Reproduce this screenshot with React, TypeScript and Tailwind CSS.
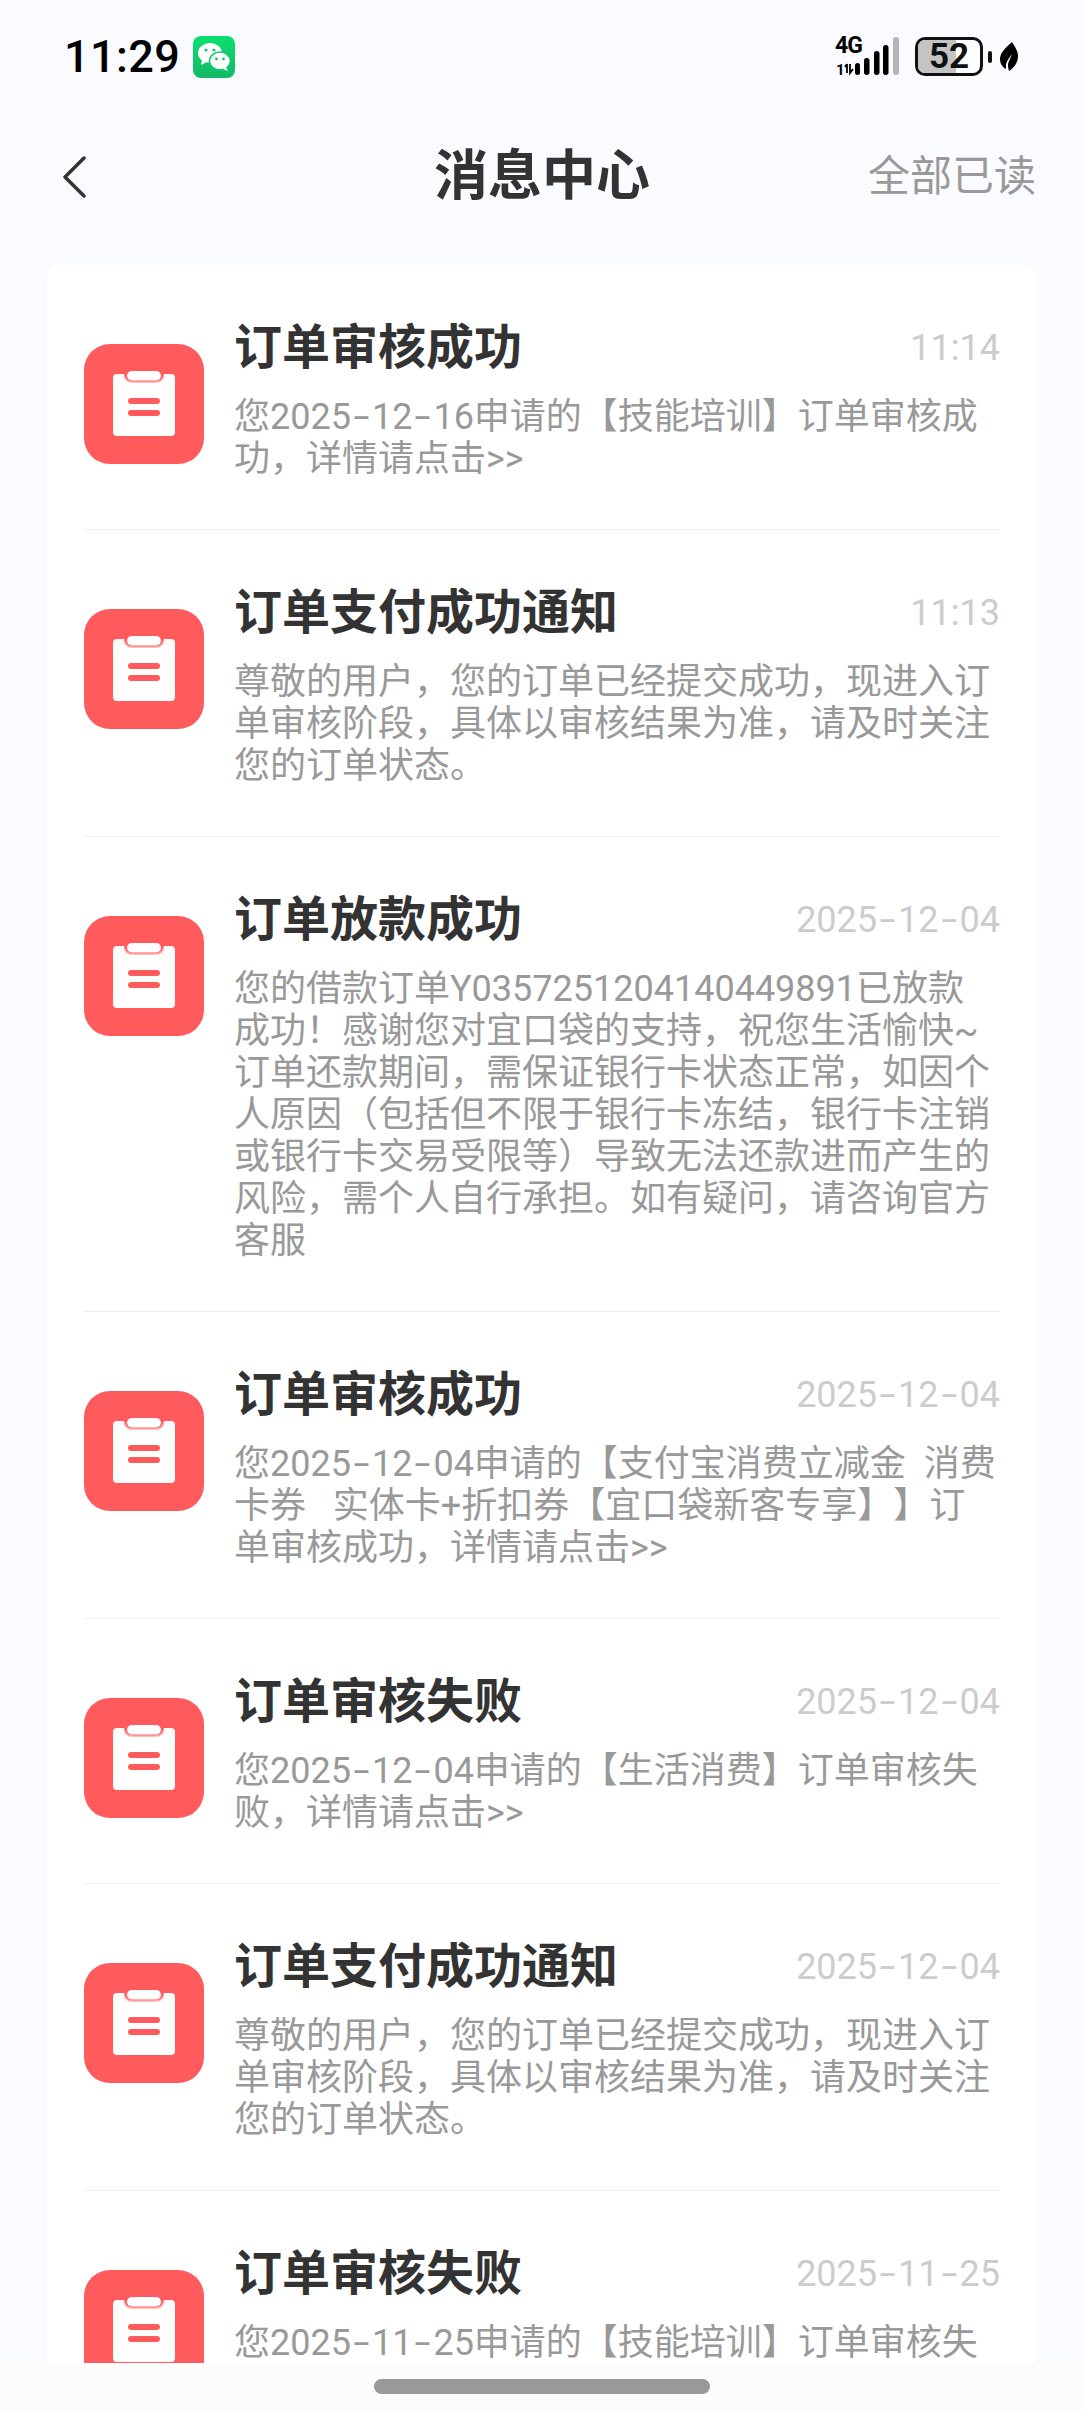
import React from "react";

const cjk = "font-['Roboto','Noto_Sans_CJK_SC',sans-serif]";

type Msg = { title: string; time: string; lines: string[] };

const msgs: Msg[] = [
  { title: "订单审核成功", time: "11:14", lines: ["您2025-12-16申请的【技能培训】订单审核成", "功，详情请点击>>"] },
  { title: "订单支付成功通知", time: "11:13", lines: ["尊敬的用户，您的订单已经提交成功，现进入订", "单审核阶段，具体以审核结果为准，请及时关注", "您的订单状态。"] },
  { title: "订单放款成功", time: "2025-12-04", lines: ["您的借款订单Y0357251204140449891已放款", "成功！感谢您对宜口袋的支持，祝您生活愉快~", "订单还款期间，需保证银行卡状态正常，如因个", "人原因（包括但不限于银行卡冻结，银行卡注销", "或银行卡交易受限等）导致无法还款进而产生的", "风险，需个人自行承担。如有疑问，请咨询官方", "客服"] },
  { title: "订单审核成功", time: "2025-12-04", lines: ["您2025-12-04申请的【支付宝消费立减金  消费", "卡券   实体卡+折扣券【宜口袋新客专享】】订", "单审核成功，详情请点击>>"] },
  { title: "订单审核失败", time: "2025-12-04", lines: ["您2025-12-04申请的【生活消费】订单审核失", "败，详情请点击>>"] },
  { title: "订单支付成功通知", time: "2025-12-04", lines: ["尊敬的用户，您的订单已经提交成功，现进入订", "单审核阶段，具体以审核结果为准，请及时关注", "您的订单状态。"] },
  { title: "订单审核失败", time: "2025-11-25", lines: ["您2025-11-25申请的【技能培训】订单审核失"] },
];

function Dashed({ text }: { text: string }) {
  const parts = text.split(/(?<=\d)-(?=\d)/);
  return (
    <>
      {parts.map((p, i) => (
        <React.Fragment key={i}>
          {i > 0 && <span className="inline-block w-[21px] text-center scale-x-[1.6]">-</span>}
          {p}
        </React.Fragment>
      ))}
    </>
  );
}

function ClipIcon() {
  return (
    <div className="w-[120px] h-[120px] rounded-[26px] bg-[#ff5a5c] shrink-0 mt-[26px] flex items-center justify-center">
      <svg width="64" height="68" viewBox="0 0 64 68">
        <path d="M5 4h7c1 5 4 8 9 8h22c5 0 8-3 9-8h7a4 4 0 0 1 4 4v54a4 4 0 0 1-4 4H5a4 4 0 0 1-4-4V8a4 4 0 0 1 4-4z" fill="#fff" />
        <rect x="15" y="1" width="34" height="9.5" rx="4.7" fill="#fff" />
        <path d="M12 5c1 5 4 7 9 7h22c5 0 8-2 9-7" fill="none" stroke="#ffa9aa" strokeWidth="1.5" />
        <rect x="16" y="28" width="32" height="6" rx="3" fill="#ff5a5c" />
        <rect x="16" y="40" width="32" height="6" rx="3" fill="#ff5a5c" />
      </svg>
    </div>
  );
}

function WeChat() {
  return (
    <svg width="42" height="42" viewBox="0 0 42 42" className="ml-[13px]">
      <defs>
        <linearGradient id="wg" x1="0" y1="0" x2="0" y2="1">
          <stop offset="0" stopColor="#0ae070" />
          <stop offset="1" stopColor="#14b866" />
        </linearGradient>
      </defs>
      <rect width="42" height="42" rx="8" fill="url(#wg)" />
      <ellipse cx="17" cy="17" rx="12" ry="10" fill="#fff" />
      <path d="M9 23l-1 6 6-3z" fill="#fff" />
      <ellipse cx="27" cy="25" rx="10.5" ry="9" fill="#fff" stroke="#10c86a" strokeWidth="1.5" />
      <path d="M33 31l2 4-5-2z" fill="#fff" />
      <circle cx="13" cy="14" r="1.6" fill="#10c86a" />
      <circle cx="21" cy="14" r="1.6" fill="#10c86a" />
      <circle cx="23.5" cy="23" r="1.4" fill="#10c86a" />
      <circle cx="30.5" cy="23" r="1.4" fill="#10c86a" />
    </svg>
  );
}

function StatusRight() {
  return (
    <div className="flex items-center">
      <div className="relative w-[64px] h-[40px] font-['Roboto',sans-serif] font-bold text-black">
        <span className="absolute left-0 top-[-3px] text-[23px] leading-[24px] tracking-[-1px]">4G</span>
        <span className="absolute left-[1px] bottom-[-1px] text-[15px] leading-[16px]">1</span>
        <svg width="64" height="40" viewBox="0 0 64 40" className="absolute left-0 top-0">
          <path d="M12 27v9M12 27l-2 3M15 27v9l3-4" stroke="#000" strokeWidth="1.8" fill="none" />
          <rect x="20" y="26" width="5" height="12" rx="2.5" fill="#000" />
          <rect x="29" y="21" width="5.5" height="17" rx="2.7" fill="#000" />
          <rect x="39" y="14" width="5.5" height="24" rx="2.7" fill="#000" />
          <rect x="48" y="8" width="5.5" height="30" rx="2.7" fill="#000" />
          <rect x="58" y="0" width="6" height="38" rx="3" fill="#b5b5b5" />
        </svg>
      </div>
      <div className="relative ml-[16px] w-[68px] h-[39px] rounded-[10px] border-[3px] border-[#111] overflow-hidden bg-white flex items-center justify-center">
        <div className="absolute left-0 top-0 bottom-0 w-[38px] bg-[#c4c4c4]" />
        <span className="relative font-['Roboto',sans-serif] font-bold text-[35px] leading-none text-[#111]">52</span>
      </div>
      <div className="ml-[5px] w-[4px] h-[12px] rounded-[2px] bg-[#111]" />
      <svg width="20" height="30" viewBox="0 0 20 30" className="ml-[7px]">
        <path d="M13 0c4 6 6 10 6 14 0 6-3 11-9 15-1-3-1-5-1-7 1-4 3-7 4-10-2 3-5 6-6 10v5C3 25 1 21 1 17 1 11 7 5 13 0z" fill="#000" />
      </svg>
    </div>
  );
}

function Row({ m, last }: { m: Msg; last: boolean }) {
  return (
    <div className={`flex gap-[31px] pt-[53px] pb-[49px] ml-[37px] mr-[36px] ${last ? "" : "border-b border-[#eeeeee]"}`}>
      <ClipIcon />
      <div className="flex-1 min-w-0">
        <div className="flex items-center justify-between h-[60px]">
          <span className="text-[48px] leading-[60px] font-bold text-[#333333] -ml-[1px]">{m.title}</span>
          <span className="text-[36px] leading-[60px] text-[#cccccc]"><Dashed text={m.time} /></span>
        </div>
        <div className="mt-[18px] -ml-[1px] text-[36px] leading-[42px] text-[#999999] whitespace-pre [text-spacing-trim:space-all]">
          {m.lines.map((l, i) => (
            <div key={i}><Dashed text={l} /></div>
          ))}
        </div>
      </div>
    </div>
  );
}

export default function App() {
  return (
    <div className={`w-[1084px] h-[2412px] flex flex-col overflow-hidden bg-[#f9fbff] ${cjk}`}>
      <div className="flex-1 min-h-0 overflow-hidden">
        <div className="flex items-center justify-between pl-[64px] pr-[65px] h-[113px]">
          <div className="flex items-center">
            <span className="font-['Roboto',sans-serif] font-medium text-[45px] leading-[44px] tracking-[0.4px] text-black">11:29</span>
            <WeChat />
          </div>
          <StatusRight />
        </div>
        <div className="flex items-center justify-between pl-[62px] pr-[48px] h-[128px]">
          <svg width="24" height="42" viewBox="0 0 24 42" fill="none">
            <path d="M22 2L3 21l19 19" stroke="#333" strokeWidth="3.5" strokeLinecap="round" strokeLinejoin="round" />
          </svg>
          <span className="text-[54px] leading-[64px] font-bold text-[#333333] ml-[130px]">消息中心</span>
          <span className="text-[42px] leading-[50px] text-[#999999]">全部已读</span>
        </div>
        <div className="ml-[47px] mt-[24px] bg-white rounded-t-[14px] w-[989px]">
          {msgs.map((m, i) => (
            <Row key={i} m={m} last={i === msgs.length - 1} />
          ))}
        </div>
      </div>
      <div className="h-[49px] shrink-0 bg-[#fcfcfc] flex justify-center pt-[16px]">
        <div className="w-[336px] h-[15px] rounded-full bg-[#999999]" />
      </div>
    </div>
  );
}
